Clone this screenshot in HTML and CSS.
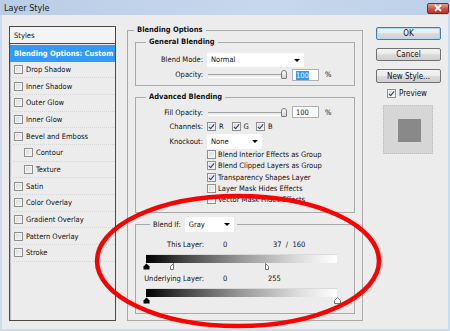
FILE: index.html
```html
<!DOCTYPE html>
<html lang="en">
  <head>
    <meta charset="UTF-8" />
    <meta name="viewport" content="width=device-width, initial-scale=1.0" />
    <title>Layer Style</title>
    <link rel="stylesheet" href="styles.css">
  </head>
  <body>
    <div class="window">
      <!-- Title bar -->
      <div class="titlebar">
        <span class="title">Layer Style</span>
        <span class="close">
          <svg width="10" height="8" viewBox="0 0 10 8">
            <path d="M2 1 L8 7 M8 1 L2 7" stroke="#fff" stroke-width="1.8" fill="none" />
          </svg>
        </span>
      </div>

      <div class="body">
        <!-- Styles list -->
        <div class="styles-panel">
          <div class="styles-head">Styles</div>
          <ul class="styles-list">
            <li class="active">Blending Options: Custom</li>
            <li><span class="cb"></span>Drop Shadow</li>
            <li><span class="cb"></span>Inner Shadow</li>
            <li><span class="cb"></span>Outer Glow</li>
            <li><span class="cb"></span>Inner Glow</li>
            <li><span class="cb"></span>Bevel and Emboss</li>
            <li class="sub"><span class="cb"></span>Contour</li>
            <li class="sub"><span class="cb"></span>Texture</li>
            <li><span class="cb"></span>Satin</li>
            <li><span class="cb"></span>Color Overlay</li>
            <li><span class="cb"></span>Gradient Overlay</li>
            <li><span class="cb"></span>Pattern Overlay</li>
            <li><span class="cb"></span>Stroke</li>
          </ul>
        </div>

        <!-- Blending options -->
        <fieldset class="group outer">
          <legend>Blending Options</legend>

          <fieldset class="group general">
            <legend>General Blending</legend>
            <div class="row">
              <span class="lbl">Blend Mode:</span>
              <div class="select mode">Normal<span class="arrow"></span></div>
            </div>
            <div class="row">
              <span class="lbl">Opacity:</span>
              <div class="slider"><span class="thumb"></span></div>
              <div class="num"><span class="sel">100</span></div>
              <span class="pct">%</span>
            </div>
          </fieldset>

          <fieldset class="group advanced">
            <legend>Advanced Blending</legend>
            <div class="row">
              <span class="lbl">Fill Opacity:</span>
              <div class="slider"><span class="thumb"></span></div>
              <div class="num">100</div>
              <span class="pct">%</span>
            </div>
            <div class="row">
              <span class="lbl">Channels:</span>
              <span class="chan"><span class="cb on"></span>R</span>
              <span class="chan"><span class="cb on"></span>G</span>
              <span class="chan"><span class="cb on"></span>B</span>
            </div>
            <div class="row knock">
              <span class="lbl">Knockout:</span>
              <div class="select small">None<span class="arrow"></span></div>
            </div>
            <div class="checks">
              <div class="check"><span class="cb"></span>Blend Interior Effects as Group</div>
              <div class="check"><span class="cb on"></span>Blend Clipped Layers as Group</div>
              <div class="check"><span class="cb on"></span>Transparency Shapes Layer</div>
              <div class="check"><span class="cb"></span>Layer Mask Hides Effects</div>
              <div class="check"><span class="cb"></span>Vector Mask Hides Effects</div>
            </div>
          </fieldset>

          <fieldset class="group blendif">
            <legend>
              <span class="legend-row">
                <span>Blend If:</span>
                <span class="select gray">Gray<span class="arrow"></span></span>
              </span>
            </legend>
            <div class="level-row first">
              <span class="lbl">This Layer:</span>
              <span class="v1">0</span>
              <span class="v2">37&nbsp;&nbsp;/&nbsp;&nbsp;160</span>
            </div>
            <div class="bar"></div>
            <div class="markers">
              <svg class="mk" style="left: 0%" width="7" height="7" viewBox="0 0 7 7"><path d="M3.5 0.5 L6.5 3.5 V6.5 H0.5 V3.5 Z" fill="#000" /></svg>
              <svg class="mk" style="left: 14.5%" width="7" height="7" viewBox="0 0 7 7"><path d="M3.5 0.5 L0.5 3.5 V6.5 H3.5 Z" fill="#fff" stroke="#555" stroke-width="0.8" /></svg>
              <svg class="mk" style="left: 62.7%" width="7" height="7" viewBox="0 0 7 7"><path d="M3.5 0.5 L6.5 3.5 V6.5 H3.5 Z" fill="#fff" stroke="#555" stroke-width="0.8" /></svg>
            </div>
            <div class="level-row">
              <span class="lbl">Underlying Layer:</span>
              <span class="v1">0</span>
              <span class="v2 end">255</span>
            </div>
            <div class="bar"></div>
            <div class="markers">
              <svg class="mk" style="left: 0%" width="7" height="7" viewBox="0 0 7 7"><path d="M3.5 0.5 L6.5 3.5 V6.5 H0.5 V3.5 Z" fill="#000" /></svg>
              <svg class="mk" style="left: 100%" width="7" height="7" viewBox="0 0 7 7"><path d="M3.5 0.5 L6.5 3.5 V6.5 H0.5 V3.5 Z" fill="#fff" stroke="#555" stroke-width="0.8" /></svg>
            </div>
          </fieldset>
        </fieldset>

        <!-- Buttons and preview -->
        <div class="side">
          <div class="btn default">OK</div>
          <div class="btn">Cancel</div>
          <div class="btn tall">New Style...</div>
          <div class="preview-check"><span class="cb on"></span>Preview</div>
          <div class="preview"><div class="swatch"></div></div>
        </div>
      </div>

      <!-- Red marker ellipse -->
      <svg class="circle" width="450" height="331" viewBox="0 0 450 331">
        <ellipse cx="238" cy="261" rx="141" ry="65" fill="none" stroke="#ff0000" stroke-width="4.5" />
      </svg>
    </div>
  </body>
</html>
```

FILE: styles.css
```css
* {
  box-sizing: border-box;
}
html,
body {
  margin: 0;
  padding: 0;
}
body {
  width: 450px;
  height: 331px;
  overflow: hidden;
  background: #ececec;
  font-family: "DejaVu Sans Condensed", "Liberation Sans", sans-serif;
  font-size: 7.5px;
  color: #111;
}
.window {
  position: relative;
  width: 450px;
  height: 331px;
}

/* title bar */
.titlebar {
  height: 15px;
  display: flex;
  align-items: center;
  justify-content: space-between;
  padding: 0 1px 0 4px;
  background: linear-gradient(to right, #b9cde6, #c8d8ec 60%, #bcd0e8);
}
.title {
  font-size: 9px;
  color: #1a1a1a;
}
.close {
  width: 22px;
  height: 11px;
  margin-top: 1px;
  display: flex;
  align-items: center;
  justify-content: center;
  border: 1px solid #7a2a20;
  border-radius: 2px;
  background: linear-gradient(#e8a093, #c75a48 50%, #b8321f);
}

.body {
  height: 316px;
  display: flex;
  align-items: flex-start;
  padding-left: 7px;
  border: 2px solid #cddbee;
  border-top: 0;
}

/* styles list */
.styles-panel {
  width: 107px;
  height: 295px;
  margin-top: 11px;
  border: 1px solid #4a4a4a;
  box-shadow: inset 1px 1px 0 #bdbdbd;
}
.styles-head {
  height: 17px;
  padding: 4px 0 0 4px;
  background: #f4f4f4;
  border-bottom: 1px solid #4a4a4a;
}
.styles-list {
  list-style: none;
  margin: 1px 0 0;
  padding: 0;
}
.styles-list li {
  height: 16.67px;
  display: flex;
  align-items: center;
  padding-left: 4px;
  border-bottom: 1px dotted #d6d6d6;
}
.styles-list li.active {
  background: #3399ff;
  color: #fff;
  font-weight: bold;
  border-bottom: 0;
}
.styles-list li.sub {
  padding-left: 14px;
}
.styles-list .cb {
  margin-right: 3px;
}

/* checkbox */
.cb {
  position: relative;
  flex: none;
  display: inline-block;
  width: 9px;
  height: 9px;
  border: 1px solid #8e8f8f;
  background: linear-gradient(135deg, #d7d7d7, #f7f7f7);
  box-shadow: inset 0 0 0 1px #f4f4f4;
}
.cb.on::after {
  content: "";
  position: absolute;
  left: 2px;
  top: 0px;
  width: 2px;
  height: 5px;
  border: solid #27398c;
  border-width: 0 1.5px 1.5px 0;
  transform: rotate(40deg);
}

/* group boxes */
.group {
  margin: 0;
  padding: 0;
  min-width: 0;
  border: 1px solid #a9a9a9;
}
.group legend {
  margin-left: 10px;
  padding: 0 3px;
  line-height: 10px;
  font-weight: bold;
}
.outer {
  width: 236px;
  height: 296px;
  margin: 10px 0 0 11px;
  padding: 2px 7px 0;
}
.outer > legend {
  margin-left: -1px;
}
.general {
  padding: 5px 0 3px;
}
.advanced {
  margin-top: 6px;
  height: 121px;
  padding: 3px 0 0;
}
.blendif {
  margin-top: 4px;
  height: 97px;
  padding: 0;
}
.blendif legend {
  margin-left: 14px;
  font-weight: normal;
  line-height: 15px;
}
.legend-row {
  display: flex;
  align-items: center;
  gap: 4px;
}

.row {
  display: flex;
  align-items: center;
  height: 15px;
}
.advanced .row {
  height: 14px;
}
.advanced .row.knock {
  height: 16px;
}
.lbl {
  width: 67px;
  margin-right: 4px;
  text-align: right;
  flex: none;
}

/* select */
.select {
  position: relative;
  display: flex;
  align-items: center;
  height: 14px;
  padding-left: 4px;
  background: #fff;
}
.select.mode {
  width: 97px;
}
.select.small {
  width: 55px;
  height: 15px;
}
.select.gray {
  width: 49px;
  height: 15px;
}
.arrow {
  position: absolute;
  right: 4px;
  top: 6px;
  border-left: 3px solid transparent;
  border-right: 3px solid transparent;
  border-top: 3px solid #000;
}

/* slider */
.slider {
  position: relative;
  width: 80px;
  height: 11px;
  margin-right: 5px;
}
.slider::before {
  content: "";
  position: absolute;
  left: 1px;
  right: 4px;
  top: 5px;
  height: 2px;
  border-top: 1px solid #a0a0a0;
  border-bottom: 1px solid #fff;
}
.thumb {
  position: absolute;
  right: 0;
  top: 1px;
  width: 6px;
  height: 9px;
  border: 1px solid #7d7d7d;
  border-radius: 3px 3px 1px 1px;
  background: linear-gradient(#fdfdfd, #d2d2d2);
}
.num {
  width: 27px;
  height: 12px;
  padding: 1px 0 0 3px;
  border: 1px solid #abb1b8;
  background: #fff;
  line-height: 9px;
}
.num .sel {
  background: #3399ff;
  color: #fff;
}
.pct {
  margin-left: 6px;
}

/* channels and checks */
.chan {
  display: inline-flex;
  align-items: center;
  width: 24.5px;
}
.chan .cb {
  margin-right: 3px;
}
.checks {
  padding-left: 71px;
}
.check {
  display: flex;
  align-items: center;
  height: 11.3px;
}
.check .cb {
  margin-right: 2px;
}

/* blend if */
.level-row {
  display: flex;
  align-items: center;
  height: 12px;
  margin-top: 2px;
}
.level-row.first {
  margin-top: 6px;
}
.level-row .lbl {
  width: 68px;
  margin-right: 19px;
}
.v1 {
  width: 45px;
}
.v2 {
  padding-left: 5px;
}
.v2.end {
  padding-left: 0;
}
.bar {
  width: 191px;
  height: 9px;
  margin: 4px 0 0 10px;
  background: linear-gradient(to right, #000, #444 20%, #999 50%, #ddd 80%, #fff);
  border-top: 1px solid #d9d9d9;
}
.markers {
  position: relative;
  width: 191px;
  height: 7px;
  margin-left: 10px;
}
.mk {
  position: absolute;
  top: 0;
  margin-left: -3.5px;
}

/* side column */
.side {
  width: 65px;
  margin: 12px 0 0 13px;
}
.btn {
  height: 13px;
  display: flex;
  align-items: center;
  justify-content: center;
  margin-bottom: 8px;
  border: 1px solid #707070;
  border-radius: 2px;
  background: linear-gradient(#f3f3f3, #ebebeb 50%, #dcdcdc 50%, #cfcfcf);
  font-size: 8px;
}
.btn.default {
  border-color: #3c7fb1;
  box-shadow: inset 0 0 0 1px #a8dcf5;
}
.btn.tall {
  height: 14px;
  margin-bottom: 6px;
}
.preview-check {
  display: flex;
  align-items: center;
  height: 9px;
  padding-left: 11px;
  font-size: 8px;
}
.preview-check .cb {
  margin-right: 3px;
}
.preview {
  width: 50px;
  height: 49px;
  margin: 7px 0 0 7px;
  padding: 13px 0 0 14px;
  background: #d6d6d6;
  border: 1px dotted #bdbdbd;
}
.swatch {
  width: 23px;
  height: 23px;
  background: #898989;
}

.circle {
  position: absolute;
  left: 0;
  top: 0;
  pointer-events: none;
}
```
